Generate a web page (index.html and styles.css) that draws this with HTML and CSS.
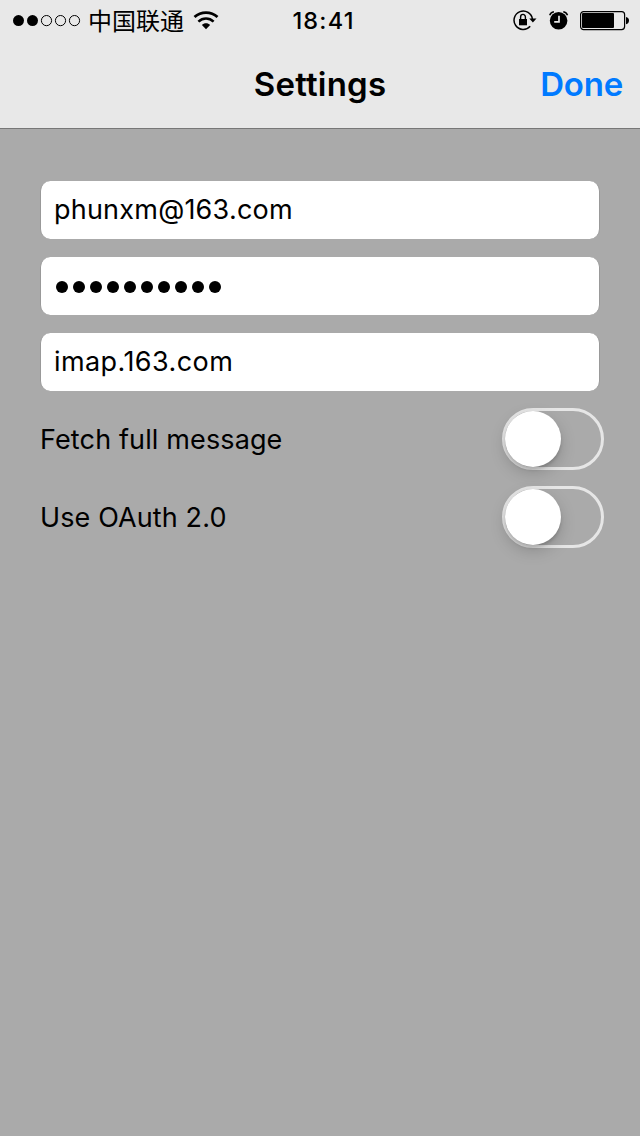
FILE: index.html
```html
<!DOCTYPE html>
<html lang="en">
<head>
<meta charset="utf-8">
<title>Settings</title>
<link rel="stylesheet" href="styles.css">
</head>
<body>
<header class="header">
  <div class="status">
    <div class="status-left">
      <svg class="signal" width="68" height="12" viewBox="0 0 68 12">
        <circle cx="5.5" cy="5.6" r="5.5"/><circle cx="19.5" cy="5.6" r="5.5"/>
        <g fill="none" stroke="#000" stroke-width="1"><circle cx="33.5" cy="5.6" r="5.1"/><circle cx="47.5" cy="5.6" r="5.1"/><circle cx="61.5" cy="5.6" r="5.1"/></g>
      </svg>
      <span class="carrier">中国联通</span>
      <svg class="wifi" width="26" height="20" viewBox="0 0 26 20">
        <g fill="none" stroke="#000"><path d="M1.5 6C8 .1 18 .1 24.5 6" stroke-width="2.8"/><path d="M5.4 10.6C10 6.4 16 6.4 20.6 10.6" stroke-width="2.6"/></g>
        <path d="M8.9 14.1C11 11.7 15 11.7 17.1 14.1L13 18.2Z"/>
      </svg>
    </div>
    <span class="time">18:41</span>
    <div class="status-right">
      <svg width="24" height="22" viewBox="0 0 24 22">
        <path d="M17.2 16.3A9.2 9.2 0 1 1 19.4 9.2" fill="none" stroke="#000" stroke-width="1.5"/>
        <path d="M16.3 8.6H23.5L19.9 12.6Z"/>
        <path d="M6 9H14V15.3H6Z"/>
        <path d="M7.6 9.5V7a2.4 2.6 0 0 1 4.8 0V9.5" fill="none" stroke="#000" stroke-width="1.4"/>
      </svg>
      <svg class="alarm" width="20" height="20" viewBox="0 0 20 20">
        <circle cx="9.6" cy="9.8" r="8.8"/>
        <path d="M.7 4.2Q1.7 1.3 4.9 .8M14.3 .8Q17.5 1.3 18.5 4.2" fill="none" stroke="#000" stroke-width="1.5"/>
        <path d="M10 4.8V10.8H5.2" fill="none" stroke="#e8e8e8" stroke-width="1.7"/>
      </svg>
      <svg class="battery" width="49" height="20" viewBox="0 0 49 20">
        <rect x=".6" y=".6" width="44" height="18" rx="3" fill="none" stroke="#000" stroke-width="1.2"/>
        <rect x="2" y="2.1" width="32" height="15" rx="1"/>
        <path d="M46 6Q49 6.6 49 9.6T46 13.2Z"/>
      </svg>
    </div>
  </div>
  <nav class="nav">
    <span></span>
    <h1 class="title">Settings</h1>
    <a class="done">Done</a>
  </nav>
</header>
<main class="form">
  <div class="field"><span class="email">phunxm@163.com</span></div>
  <div class="field">
    <span class="password"><i></i><i></i><i></i><i></i><i></i><i></i><i></i><i></i><i></i><i></i></span>
  </div>
  <div class="field"><span class="host">imap.163.com</span></div>
  <div class="row"><span class="fetch">Fetch full message</span><span class="switch"><b class="knob"></b></span></div>
  <div class="row"><span class="oauth">Use OAuth 2.0</span><span class="switch"><b class="knob"></b></span></div>
</main>
</body>
</html>
```
FILE: styles.css
```css
* { box-sizing: border-box; }
body {
  margin: 0;
  min-height: 1136px;
  background: #aaa;
  color: #000;
  font-family: Inter, "Noto Sans CJK SC", sans-serif;
}
svg { display: block; flex: none; }
.header {
  height: 129px;
  background: #e8e8e8;
  border-bottom: 1px solid #777;
}
.status, .nav {
  display: grid;
  grid-template-columns: 1fr auto 1fr;
  align-items: center;
}
.status { height: 40px; padding: 1px 11px 0 13px; }
.status-left, .status-right { display: flex; align-items: center; }
.status-right { justify-content: flex-end; }
.carrier {
  margin-left: 7px;
  padding-bottom: 2px;
  font: 24px/36px "Noto Sans CJK SC", sans-serif;
}
.wifi { margin-left: 9px; }
.time { padding-left: 5px; font-size: 23.5px; font-weight: 500; line-height: 38px; letter-spacing: 1.2px; }
.alarm { margin-left: 12px; }
.battery { margin-left: 11px; }
.nav { height: 88px; padding: 0 17px; }
.title { margin: 0; padding-top: 1px; font-size: 33px; font-weight: 600; line-height: 87px; letter-spacing: .2px; }
.done { justify-self: end; color: #007aff; font-size: 33px; font-weight: 600; line-height: 88px; letter-spacing: -.2px; }
.form { display: flex; flex-direction: column; padding: 52px 36px 0 40px; }
.field {
  display: flex;
  align-items: center;
  width: 560px;
  height: 58px;
  margin-bottom: 18px;
  padding: 0 14px 1px 13px;
  background: #fff;
  border: 1px solid #999;
  border-width: 0 1px;
  border-radius: 10px;
  font-size: 27px;
}
.email { letter-spacing: .22px; }
.host { letter-spacing: .42px; }
.fetch { letter-spacing: .13px; }
.oauth { letter-spacing: .12px; }
.password { display: flex; gap: 5px; padding: 3px 0 0 2px; }
.password i { width: 12px; height: 12px; border-radius: 50%; background: #000; }
.row {
  display: flex;
  align-items: center;
  justify-content: space-between;
  height: 62px;
  margin: -1px 0 17px;
  font-size: 27px;
}
.switch {
  width: 102px;
  height: 62px;
  border: 3px solid #e6e6e6;
  border-radius: 31px;
}
.knob {
  display: block;
  width: 56px;
  height: 56px;
  border-radius: 50%;
  background: #fff;
  box-shadow: 0 6px 16px rgba(0,0,0,.18), 0 3px 3px rgba(0,0,0,.13);
}
```
